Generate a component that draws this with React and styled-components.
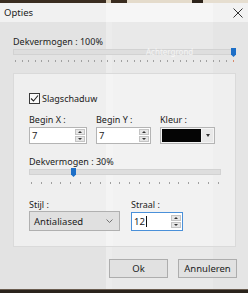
import styled, { createGlobalStyle } from 'styled-components'

const GlobalStyle = createGlobalStyle`
  html, body {
    margin: 0;
    padding: 0;
  }
  body {
    width: 248px;
    height: 293px;
    overflow: hidden;
    font-family: "Noto Sans", "Segoe UI", sans-serif;
    font-size: 9px;
    color: #1b1b1b;
  }
`

const Screen = styled.div`
  width: 248px;
  height: 293px;
  display: flex;
  flex-direction: column;
  background: #2a231c;
`

const TopStrip = styled.div`
  height: 3px;
  background: linear-gradient(
    90deg,
    #3a2d21 0 106px,
    #d8ccb7 106px 111px,
    #3a2d20 111px 127px,
    #e4dbcb 127px 192px,
    #2d241b 192px 203px,
    #e6ded0 203px
  );
`

const BottomStrip = styled.div`
  height: 4px;
  background: linear-gradient(180deg, #6b5d50 0 1px, #2a231c 1px);
`

const Dialog = styled.div`
  flex: 1;
  display: flex;
  flex-direction: column;
`

const TitleBar = styled.div`
  height: 19px;
  display: flex;
  align-items: center;
  justify-content: space-between;
  padding: 0 5px 0 4px;
  background: linear-gradient(
    90deg,
    #f1f1f1 0 106px,
    #f6f6f6 106px 213px,
    #f2f2f2 213px
  );
  font-size: 9.5px;
`

const Body = styled.div`
  flex: 1;
  display: flex;
  flex-direction: column;
  padding: 0 12px 0 13px;
  background: linear-gradient(
    90deg,
    #e3e3e3 0 106px,
    #ececec 106px 112px,
    #e9e9e9 112px 213px,
    #e5e5e5 213px
  );
`

const Label = styled.div`
  height: 12px;
  line-height: 12px;
  margin-top: ${(p) => p.$top || 0}px;
  white-space: nowrap;
`

const SliderBox = styled.div`
  position: relative;
  width: ${(p) => p.$width}px;
  height: ${(p) => p.$height}px;
  display: flex;
  flex-direction: column;
  padding-top: 1px;
  box-sizing: border-box;
`

const Track = styled.div`
  height: 6px;
  box-sizing: border-box;
  border: 1px solid #d2d2d2;
  background: #dedede;
  display: flex;
  align-items: center;
  padding-left: 132px;
  color: rgba(255, 255, 255, 0.7);
  font-size: 8px;
  line-height: 6px;
`

const Ticks = styled.div`
  margin-top: ${(p) => p.$gap}px;
  height: 2px;
  display: flex;
  justify-content: space-between;
  padding: 0 2px;
`

const Tick = styled.span`
  width: 1px;
  height: 2px;
  background: ${(p) => (p.$hot ? '#d98a6c' : '#a0a0a0')};
`

const Thumb = styled.div`
  position: absolute;
  top: 0;
  left: ${(p) => p.$left}px;
  width: 5px;
  height: 9px;
  background: #1d6fc7;
  clip-path: polygon(0 0, 100% 0, 100% 72%, 50% 100%, 0 72%);
`

const Group = styled.div`
  margin-top: 10px;
  height: 174px;
  box-sizing: border-box;
  border: 1px solid #dadada;
  padding: 19px 0 0 15px;
  background: linear-gradient(
    90deg,
    #efefef 0 92px,
    #f4f4f4 92px 99px,
    #f2f2f2 99px 199px,
    #efefef 199px
  );
  display: flex;
  flex-direction: column;
`

const CheckRow = styled.label`
  height: 11px;
  display: flex;
  align-items: center;
  gap: 2px;
`

const CheckBox = styled.span`
  width: 11px;
  height: 11px;
  box-sizing: border-box;
  border: 1px solid #3a3a3a;
  background: #fafafa;
  display: flex;
  align-items: center;
  justify-content: center;
`

const FieldRow = styled.div`
  display: flex;
  margin-top: ${(p) => p.$top || 0}px;
  gap: ${(p) => p.$gap}px;
`

const Field = styled.div`
  display: flex;
  flex-direction: column;
  width: ${(p) => p.$width}px;
`

const SpinBox = styled.div`
  margin-top: ${(p) => p.$top || 1}px;
  height: ${(p) => p.$height || 17}px;
  box-sizing: border-box;
  border: 1px solid ${(p) => (p.$focus ? '#4a90d9' : '#b4b4b4')};
  background: #fff;
  display: flex;
  align-items: center;
  padding: 0 1px 0 2px;
  font-size: 9.5px;
`

const SpinText = styled.span`
  flex: 1;
  display: flex;
  align-items: center;
`

const Caret = styled.span`
  width: 1px;
  height: 11px;
  background: #111;
  margin-left: 1px;
`

const SpinButtons = styled.div`
  width: 10px;
  display: flex;
  flex-direction: column;
  gap: 1px;
`

const SpinButton = styled.span`
  height: 6px;
  box-sizing: border-box;
  border: 1px solid #c4c4c4;
  background: #e6e6e6;
  display: flex;
  align-items: center;
  justify-content: center;

  &::after {
    content: '';
    border-left: 2px solid transparent;
    border-right: 2px solid transparent;
    ${(p) =>
      p.$up
        ? 'border-bottom: 2px solid #333;'
        : 'border-top: 2px solid #333;'}
  }
`

const ColorBox = styled.div`
  margin-top: 1px;
  height: 17px;
  box-sizing: border-box;
  border: 1px solid #b4b4b4;
  background: #f4f4f4;
  display: flex;
  padding: 1px;
  gap: 1px;
`

const Swatch = styled.span`
  flex: 1;
  background: #050505;
`

const DropButton = styled.span`
  width: 11px;
  display: flex;
  align-items: center;
  justify-content: center;
  background: #e8e8e8;

  &::after {
    content: '';
    border-left: 2px solid transparent;
    border-right: 2px solid transparent;
    border-top: 3px solid #333;
  }
`

const Combo = styled.div`
  height: 20px;
  box-sizing: border-box;
  border: 1px solid #b0b0b0;
  background: #e0e0e0;
  display: flex;
  align-items: center;
  justify-content: space-between;
  padding: 0 6px 0 4px;
  font-size: 9.5px;
`

const ButtonRow = styled.div`
  margin-top: 12px;
  margin-right: -1px;
  display: flex;
  justify-content: flex-end;
  gap: 10px;
`

const Button = styled.button`
  width: 59px;
  height: 19px;
  padding: 0;
  border: 1px solid #adadad;
  background: #e1e1e1;
  font-family: inherit;
  font-size: 9.5px;
  color: #1b1b1b;
`

function Slider({ width, thumb, ticks, hot, ghost, gap, height }) {
  return (
    <SliderBox $width={width} $height={height}>
      <Track>{ghost && <span>{ghost}</span>}</Track>
      <Ticks $gap={gap}>
        {Array.from({ length: ticks }, (_, i) => (
          <Tick key={i} $hot={hot && i === ticks - 1} />
        ))}
      </Ticks>
      <Thumb $left={thumb} />
    </SliderBox>
  )
}

function Spin({ value, focus, caret, height, top }) {
  return (
    <SpinBox $focus={focus} $height={height} $top={top}>
      <SpinText>
        {value}
        {caret && <Caret />}
      </SpinText>
      <SpinButtons>
        <SpinButton $up />
        <SpinButton />
      </SpinButtons>
    </SpinBox>
  )
}

export default function App() {
  return (
    <>
      <GlobalStyle />
      <Screen>
        <TopStrip />
        <Dialog>
          <TitleBar>
            <span>Opties</span>
            <svg width="10" height="10" viewBox="0 0 10 10">
              <path d="M0.5 0.5 L9.5 9.5 M9.5 0.5 L0.5 9.5" stroke="#333" strokeWidth="1" fill="none" />
            </svg>
          </TitleBar>
          <Body>
            <Label $top={14}>Dekvermogen : 100%</Label>
            <Slider width={223} height={15} thumb={218} ticks={34} hot ghost="Achtergrond" gap={5} />
            <Group>
              <CheckRow>
                <CheckBox>
                  <svg width="9" height="9" viewBox="0 0 9 9">
                    <path d="M1 4.5 L3.5 7 L8 1.5" stroke="#222" strokeWidth="1.1" fill="none" />
                  </svg>
                </CheckBox>
                <span>Slagschaduw</span>
              </CheckRow>
              <FieldRow $top={10} $gap={9}>
                <Field $width={58}>
                  <Label>Begin X :</Label>
                  <Spin value="7" />
                </Field>
                <Field $width={55}>
                  <Label>Begin Y :</Label>
                  <Spin value="7" />
                </Field>
                <Field $width={55}>
                  <Label>Kleur :</Label>
                  <ColorBox>
                    <Swatch />
                    <DropButton />
                  </ColorBox>
                </Field>
              </FieldRow>
              <Label $top={12}>Dekvermogen : 30%</Label>
              <Slider width={192} height={17} thumb={42} ticks={20} gap={7} />
              <FieldRow $top={14} $gap={11}>
                <Field $width={91}>
                  <Label>Stijl :</Label>
                  <Combo>
                    <span>Antialiased</span>
                    <svg width="7" height="4" viewBox="0 0 7 4">
                      <path d="M0.5 0.5 L3.5 3.5 L6.5 0.5" stroke="#666" strokeWidth="0.9" fill="none" />
                    </svg>
                  </Combo>
                </Field>
                <Field $width={52}>
                  <Label>Straal :</Label>
                  <Spin value="12" focus caret height={19} top={1} />
                </Field>
              </FieldRow>
            </Group>
            <ButtonRow>
              <Button>Ok</Button>
              <Button>Annuleren</Button>
            </ButtonRow>
          </Body>
        </Dialog>
        <BottomStrip />
      </Screen>
    </>
  )
}
